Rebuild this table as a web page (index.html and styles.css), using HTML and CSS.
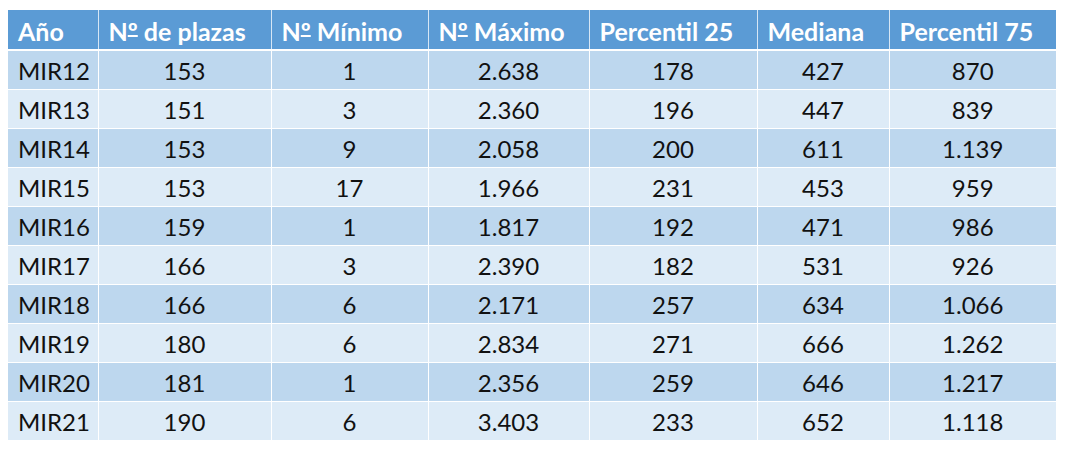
FILE: index.html
```html
<!DOCTYPE html>
<html lang="es">
<head>
<meta charset="utf-8">
<link rel="stylesheet" href="styles.css">
<title>MIR</title>
</head>
<body>
<table class="mir">
  <colgroup>
    <col class="c1"><col class="c2"><col class="c3"><col class="c4"><col class="c5"><col class="c6"><col class="c7">
  </colgroup>
  <thead>
    <tr><th>Año</th><th>N<span class="ord">º</span> de plazas</th><th>N<span class="ord">º</span> Mínimo</th><th>N<span class="ord">º</span> Máximo</th><th>Percentil 25</th><th>Mediana</th><th>Percentil 75</th></tr>
  </thead>
  <tbody>
    <tr><td>MIR12</td><td>153</td><td>1</td><td>2.638</td><td>178</td><td>427</td><td>870</td></tr>
    <tr><td>MIR13</td><td>151</td><td>3</td><td>2.360</td><td>196</td><td>447</td><td>839</td></tr>
    <tr><td>MIR14</td><td>153</td><td>9</td><td>2.058</td><td>200</td><td>611</td><td>1.139</td></tr>
    <tr><td>MIR15</td><td>153</td><td>17</td><td>1.966</td><td>231</td><td>453</td><td>959</td></tr>
    <tr><td>MIR16</td><td>159</td><td>1</td><td>1.817</td><td>192</td><td>471</td><td>986</td></tr>
    <tr><td>MIR17</td><td>166</td><td>3</td><td>2.390</td><td>182</td><td>531</td><td>926</td></tr>
    <tr><td>MIR18</td><td>166</td><td>6</td><td>2.171</td><td>257</td><td>634</td><td>1.066</td></tr>
    <tr><td>MIR19</td><td>180</td><td>6</td><td>2.834</td><td>271</td><td>666</td><td>1.262</td></tr>
    <tr><td>MIR20</td><td>181</td><td>1</td><td>2.356</td><td>259</td><td>646</td><td>1.217</td></tr>
    <tr><td>MIR21</td><td>190</td><td>6</td><td>3.403</td><td>233</td><td>652</td><td>1.118</td></tr>
  </tbody>
</table>
</body>
</html>
```

FILE: styles.css
```css
html, body {
  margin: 0;
  padding: 0;
  background: #ffffff;
}
body {
  padding: 10px 8px 0 8px;
  font-family: Lato, "Open Sans", "Liberation Sans", sans-serif;
}
.mir {
  width: 1048px;
  table-layout: fixed;
  border-collapse: collapse;
  border-spacing: 0;
}
.c1 { width: 90px; }
.c2 { width: 173px; }
.c3 { width: 157px; }
.c4 { width: 161px; }
.c5 { width: 168px; }
.c6 { width: 132px; }
.c7 { width: 167px; }

.mir th {
  height: 40px;
  padding: 2px 0 0 10px;
  background: #5b9bd5;
  color: #ffffff;
  font-weight: 700;
  font-size: 25px;
  text-align: left;
  border-bottom: 2px solid #ffffff;
  border-left: 1px solid #d6e6f5;
  white-space: nowrap;
  box-sizing: border-box;
}
.ord {
  text-decoration: underline;
  text-decoration-thickness: 2px;
  text-underline-offset: -6px;
  text-decoration-skip-ink: none;
}
.mir td {
  height: 38px;
  padding: 0;
  font-size: 24px;
  color: #111111;
  text-align: center;
  border-bottom: 1px solid #ffffff;
  border-left: 1px solid #ffffff;
  white-space: nowrap;
}
.mir th:first-child,
.mir td:first-child {
  border-left: none;
}
.mir td:first-child {
  text-align: left;
  padding-left: 10px;
}
.mir tbody tr:nth-child(odd) td { background: #bdd7ee; }
.mir tbody tr:nth-child(even) td { background: #ddebf7; }
.mir tbody tr:last-child td { border-bottom: none; }
```
